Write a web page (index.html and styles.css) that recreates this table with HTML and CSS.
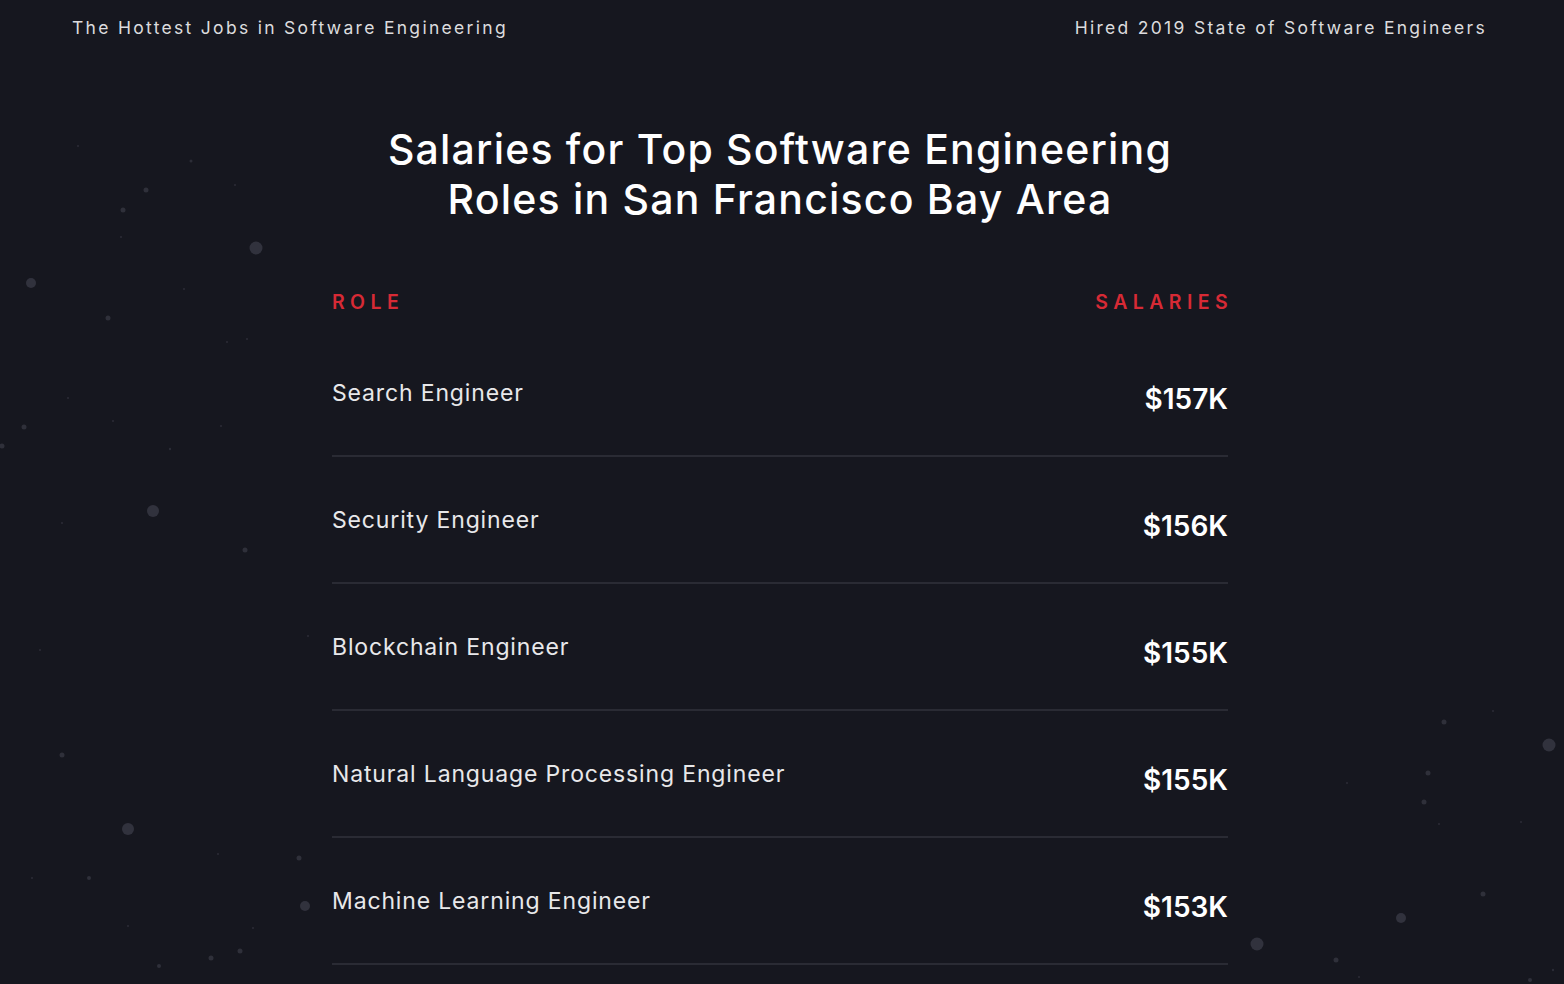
FILE: index.html
```html
<!DOCTYPE html>
<html lang="en">
<head>
  <meta charset="UTF-8">
  <title>Salaries for Top Software Engineering Roles</title>
  <link rel="stylesheet" href="styles.css">
</head>
<body>

  <!-- background specks -->
  <svg class="stars" width="1564" height="984" viewBox="0 0 1564 984">
    <g class="dim">
      <circle cx="78" cy="146" r="1"/><circle cx="191" cy="161" r="1.5"/><circle cx="235" cy="185" r="1"/>
      <circle cx="121" cy="237" r="1"/><circle cx="184" cy="289" r="1"/><circle cx="227" cy="342" r="1"/>
      <circle cx="247" cy="339" r="1"/><circle cx="68" cy="398" r="1"/><circle cx="113" cy="421" r="1"/>
      <circle cx="221" cy="426" r="1"/><circle cx="170" cy="449" r="1.2"/><circle cx="62" cy="523" r="1"/>
      <circle cx="40" cy="650" r="1"/><circle cx="308" cy="636" r="1"/><circle cx="218" cy="854" r="1"/>
      <circle cx="32" cy="878" r="1"/><circle cx="128" cy="926" r="1"/><circle cx="253" cy="928" r="1"/>
      <circle cx="1493" cy="711" r="1"/><circle cx="1347" cy="783" r="1"/><circle cx="1439" cy="824" r="1"/>
      <circle cx="1521" cy="822" r="1"/><circle cx="1359" cy="977" r="1"/><circle cx="1553" cy="970" r="1.2"/>
    </g>
    <g class="mid">
      <circle cx="146" cy="190" r="2.5"/><circle cx="123" cy="210" r="2.5"/><circle cx="108" cy="318" r="2.5"/>
      <circle cx="24" cy="427" r="2.5"/><circle cx="2" cy="446" r="2.5"/><circle cx="245" cy="550" r="2.5"/>
      <circle cx="62" cy="755" r="2.5"/><circle cx="299" cy="858" r="2.5"/><circle cx="89" cy="878" r="2"/>
      <circle cx="211" cy="958" r="2.5"/><circle cx="240" cy="951" r="2.5"/><circle cx="159" cy="966" r="2"/>
      <circle cx="1444" cy="722" r="2.5"/><circle cx="1428" cy="773" r="2.5"/><circle cx="1424" cy="802" r="2.5"/>
      <circle cx="1483" cy="894" r="2.5"/><circle cx="1336" cy="960" r="2.5"/><circle cx="1530" cy="980" r="2"/>
    </g>
    <g class="big">
      <circle cx="256" cy="248" r="6.5"/><circle cx="31" cy="283" r="5"/><circle cx="153" cy="511" r="6"/>
      <circle cx="128" cy="829" r="6"/><circle cx="305" cy="906" r="5"/><circle cx="1549" cy="745" r="6.5"/>
      <circle cx="1401" cy="918" r="5"/><circle cx="1257" cy="944" r="6.5"/>
    </g>
  </svg>

  <header class="topbar">
    <span>The Hottest Jobs in Software Engineering</span>
    <span>Hired 2019 State of Software Engineers</span>
  </header>

  <main class="content">
    <h1 class="title">Salaries for Top Software Engineering<br>Roles in San Francisco Bay Area</h1>

    <div class="table">
      <div class="table-head">
        <span>Role</span>
        <span>Salaries</span>
      </div>

      <div class="row">
        <span class="role">Search Engineer</span>
        <span class="salary">$157K</span>
      </div>
      <div class="row">
        <span class="role">Security Engineer</span>
        <span class="salary">$156K</span>
      </div>
      <div class="row">
        <span class="role">Blockchain Engineer</span>
        <span class="salary">$155K</span>
      </div>
      <div class="row">
        <span class="role">Natural Language Processing Engineer</span>
        <span class="salary">$155K</span>
      </div>
      <div class="row">
        <span class="role">Machine Learning Engineer</span>
        <span class="salary">$153K</span>
      </div>
    </div>
  </main>

</body>
</html>
```

FILE: styles.css
```css
* { box-sizing: border-box; }
body {
  background: #16171f;
  color: #e4e4e6;
  font-family: 'Inter', 'Noto Sans', sans-serif;
  margin: 0;
  width: 1564px;
  height: 984px;
  overflow: hidden;
  position: relative;
}
.stars {
  position: absolute;
  top: 0;
  left: 0;
  pointer-events: none;
}
.stars .dim circle { fill: #2c2d37; }
.stars .mid circle { fill: #2f303a; }
.stars .big circle { fill: #31323d; }

.topbar {
  position: relative;
  display: flex;
  justify-content: space-between;
  height: 54px;
  padding: 0 77px 0 72px;
  align-items: center;
  font-size: 17.5px;
  letter-spacing: 2.3px;
  color: #dcdcde;
}

.content {
  position: relative;
  padding-right: 4px;
}
.title {
  margin: 70px 0 0;
  text-align: center;
  font-size: 41px;
  line-height: 50px;
  font-weight: 500;
  color: #fff;
  letter-spacing: 1.2px;
}

.table {
  width: 896px;
  margin: 0 auto;
}
.table-head {
  display: flex;
  justify-content: space-between;
  margin-top: 64px;
  margin-bottom: 14px;
  height: 28px;
  align-items: center;
  color: #d72a35;
  font-size: 19.5px;
  font-weight: 600;
  letter-spacing: 5.4px;
  text-transform: uppercase;
}
.table-head span:last-child { margin-right: -5px; }

.row {
  display: flex;
  justify-content: space-between;
  align-items: center;
  height: 127px;
  padding-top: 13px;
  border-bottom: 2px solid #2a2b34;
}
.role {
  font-size: 23px;
  letter-spacing: 0.85px;
  color: #e8e8ea;
  margin-bottom: 12px;
}
.salary {
  font-size: 28px;
  font-weight: 600;
  color: #fff;
}
```
